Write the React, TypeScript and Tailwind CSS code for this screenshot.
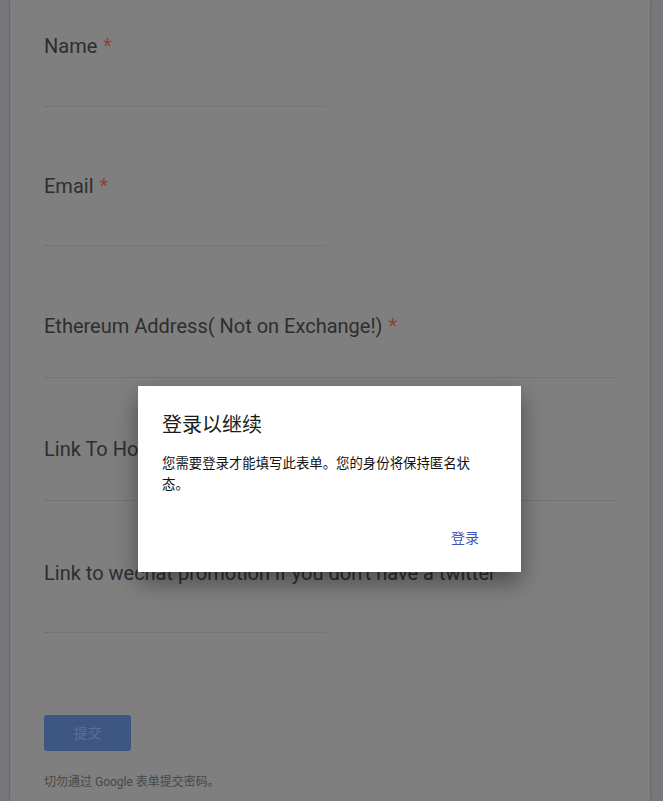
import React from "react";

const font = { fontFamily: "Roboto, 'Noto Sans CJK SC', sans-serif" };

function Label({ text, required }: { text: string; required?: boolean }) {
  return (
    <div className="h-[24px] text-[20px] leading-[24px] text-[#2e2e2e] whitespace-nowrap">
      {text}
      {required && <span className="ml-[6px] text-[#934039]">*</span>}
    </div>
  );
}

export default function App() {
  return (
    <div className="relative w-[663px] h-[801px] overflow-hidden bg-[#76777b]" style={font}>
      <div className="ml-[10px] w-[640px] h-full bg-[#7f7f7f] shadow-[0_0_2px_rgba(0,0,0,0.35)] px-[34px] pt-[34px] flex flex-col">
        {/* Name */}
        <Label text="Name" required />
        <div className="w-[282px] h-[49px] border-b border-dotted border-[#6a6a6a]" />
        <div className="h-[67px]" />
        {/* Email */}
        <Label text="Email" required />
        <div className="w-[282px] h-[48px] border-b border-dotted border-[#6a6a6a]" />
        <div className="h-[68px]" />
        {/* Ethereum */}
        <Label text="Ethereum Address( Not on Exchange!)" required />
        <div className="w-full h-[40px] border-b border-dotted border-[#6a6a6a]" />
        <div className="h-[59px]" />
        {/* Link To Ho */}
        <Label text="Link To Hoo Promotion Tweet" />
        <div className="w-full h-[40px] border-b border-dotted border-[#6a6a6a]" />
        <div className="h-[60px]" />
        {/* wechat */}
        <Label text="Link to wechat promotion if you don't have a twitter" />
        <div className="w-[282px] h-[48px] border-b border-dotted border-[#6a6a6a]" />
        <div className="h-[82px]" />
        <div className="w-[87px] h-[36px] rounded-[3px] bg-[#3e5683] flex items-center justify-center text-[14px] text-[#5c6f95]">
          提交
        </div>
        <div className="mt-[23px] text-[12px] leading-[16px] text-[#474747]">
          切勿通过 Google 表单提交密码。
        </div>
      </div>

      {/* Dialog */}
      <div
        className="absolute left-[138px] top-[386px] w-[383px] h-[186px] bg-white shadow-[0_10px_22px_rgba(0,0,0,0.4)] flex flex-col px-[24px] pt-[24px]"
        style={{ fontFamily: "'Noto Sans CJK SC', sans-serif" }}
      >
        <div className="text-[20px] leading-[28px] text-[#1a1a1a]">登录以继续</div>
        <div className="mt-[14px] w-[330px] text-[13.4px] leading-[21px] text-[#111]">
          您需要登录才能填写此表单。您的身份将保持匿名状态。
        </div>
        <div className="flex justify-end mt-[33px] pr-[18px]">
          <span className="text-[14px] leading-[20px] text-[#3f51b5]">登录</span>
        </div>
      </div>
    </div>
  );
}
